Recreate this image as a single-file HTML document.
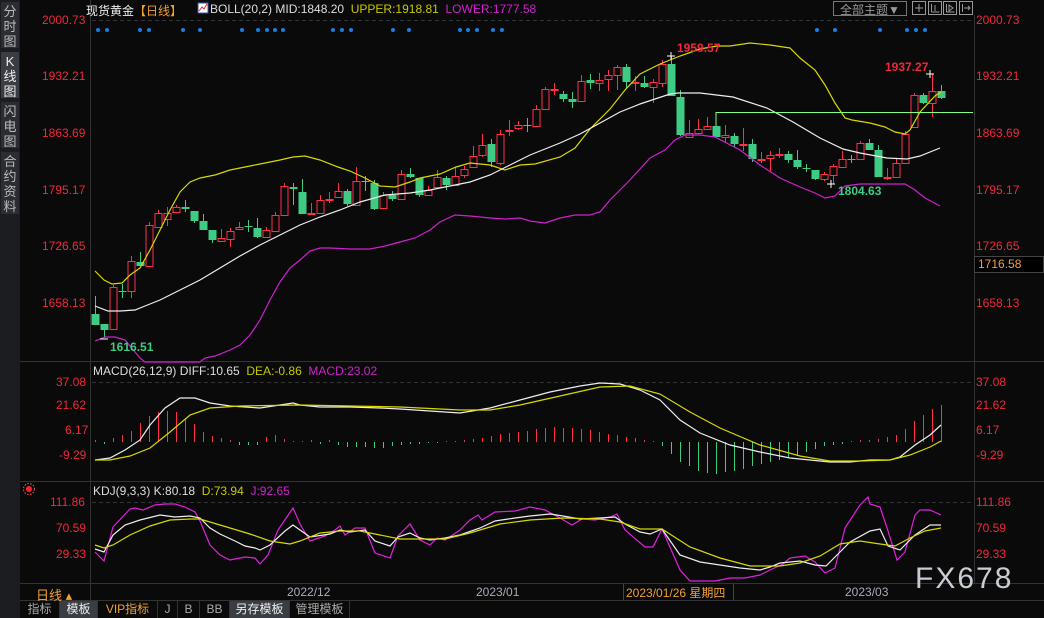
<!DOCTYPE html>
<html><head><meta charset="utf-8">
<style>
*{margin:0;padding:0;box-sizing:border-box}
body{width:1044px;height:618px;background:#0a0a0a;overflow:hidden;position:relative;font-family:"Liberation Sans","Noto Sans CJK SC",sans-serif;font-size:12px;color:#ddd}
.side{position:absolute;left:0;top:0;width:20px;height:618px;background:#1c1d21}
.tab{position:absolute;left:1px;width:18px;background:#2b2d33;color:#bbb;font-size:13px;line-height:15px;text-align:center;padding-top:2px}
.abs{position:absolute;white-space:nowrap}
.ax{position:absolute;left:976px;color:#f0283c;font-size:12px}
.tb{position:absolute;top:601px;height:17px;line-height:17px;font-size:12px;color:#aaa;text-align:center;border-right:1px solid #333}
</style></head><body>
<div class="side">
<div class="tab" style="top:2px;height:46px">分<br>时<br>图</div>
<div class="tab" style="top:52px;height:46px;background:#3a3d44;color:#eee">K<br>线<br>图</div>
<div class="tab" style="top:102px;height:46px">闪<br>电<br>图</div>
<div class="tab" style="top:152px;height:62px">合<br>约<br>资<br>料</div>
</div>
<svg class="abs" style="left:0;top:0" width="1044" height="618" id="sv">
<line x1="90.5" y1="0" x2="90.5" y2="600" stroke="#333"/>
<line x1="974.5" y1="15" x2="974.5" y2="583" stroke="#333"/>
<line x1="20" y1="361.5" x2="1044" y2="361.5" stroke="#333"/>
<line x1="20" y1="481.5" x2="1044" y2="481.5" stroke="#333"/>
<line x1="20" y1="583.5" x2="1044" y2="583.5" stroke="#333"/>
<line x1="20" y1="600.5" x2="1044" y2="600.5" stroke="#333"/>
<line x1="92" y1="20.5" x2="974" y2="20.5" stroke="#333" stroke-dasharray="4,3"/>
<line x1="92" y1="382.5" x2="974" y2="382.5" stroke="#333" stroke-dasharray="4,3"/>
<line x1="92" y1="502.5" x2="974" y2="502.5" stroke="#333" stroke-dasharray="4,3"/>
<g id="g"></g>
<rect x="974.5" y="256.5" width="69" height="16" fill="#000" stroke="#444"/>
<circle cx="29" cy="489" r="3" fill="#f22"/><circle cx="29" cy="489" r="5.5" fill="none" stroke="#f55" stroke-dasharray="1.5,1.5"/>
<rect x="833.5" y="1.5" width="73" height="14" fill="none" stroke="#777"/>
<g fill="none" stroke="#999">
<rect x="912.5" y="1.5" width="13" height="13"/><rect x="928.5" y="1.5" width="13" height="13"/><rect x="943.5" y="1.5" width="13" height="13"/><rect x="959.5" y="1.5" width="13" height="13"/>
<path d="M919 4v8M915 8h8M931.5 4v8M931.5 12h8M935 5v6M946.5 4v8M946.5 12h8M949 5l4 3-4 3zM962.5 4v8M964 8h6M968 6l2 2-2 2"/>
</g>
<rect x="198" y="3" width="10" height="10" fill="#fff" stroke="#35a"/><path d="M199 11l3-4 2 2 3-5" stroke="#e22" fill="none"/>
</svg>
<div class="abs" style="left:86px;top:2px;font-size:12px"><span style="color:#eee">现货黄金</span><span style="color:#f0a030">【日线】</span></div>
<div class="abs" style="left:210px;top:2px;font-size:12px"><span style="color:#ddd">BOLL(20,2) MID:1848.20</span>&nbsp; <span style="color:#c8c800">UPPER:1918.81</span>&nbsp; <span style="color:#d020d0">LOWER:1777.58</span></div>
<div class="abs" style="left:840px;top:1px;color:#999;font-size:12px">全部主题▼</div>
<div class="ax" style="top:13px">2000.73</div>
<div class="ax" style="top:69px">1932.21</div>
<div class="ax" style="top:126px">1863.69</div>
<div class="ax" style="top:183px">1795.17</div>
<div class="ax" style="top:239px">1726.65</div>
<div class="ax" style="top:257px;color:#f0a040;left:978px">1716.58</div>
<div class="ax" style="top:296px">1658.13</div>
<div class="ax" style="top:375px">37.08</div>
<div class="ax" style="top:398px">21.62</div>
<div class="ax" style="top:423px">6.17</div>
<div class="ax" style="top:448px">-9.29</div>
<div class="ax" style="top:495px">111.86</div>
<div class="ax" style="top:521px">70.59</div>
<div class="ax" style="top:547px">29.33</div>
<div class="abs" style="left:42px;top:13px;color:#f0283c">2000.73</div>
<div class="abs" style="left:42px;top:69px;color:#f0283c">1932.21</div>
<div class="abs" style="left:42px;top:126px;color:#f0283c">1863.69</div>
<div class="abs" style="left:42px;top:183px;color:#f0283c">1795.17</div>
<div class="abs" style="left:42px;top:239px;color:#f0283c">1726.65</div>
<div class="abs" style="left:42px;top:296px;color:#f0283c">1658.13</div>
<div class="abs" style="left:56px;top:375px;color:#f0283c">37.08</div>
<div class="abs" style="left:56px;top:398px;color:#f0283c">21.62</div>
<div class="abs" style="left:65px;top:423px;color:#f0283c">6.17</div>
<div class="abs" style="left:59px;top:448px;color:#f0283c">-9.29</div>
<div class="abs" style="left:50px;top:495px;color:#f0283c">111.86</div>
<div class="abs" style="left:56px;top:521px;color:#f0283c">70.59</div>
<div class="abs" style="left:56px;top:547px;color:#f0283c">29.33</div>
<div class="abs" style="left:677px;top:41px;color:#f0283c;font-weight:bold">1959.57</div>
<div class="abs" style="left:885px;top:60px;color:#f0283c;font-weight:bold">1937.27</div>
<div class="abs" style="left:838px;top:184px;color:#3ecb84;font-weight:bold">1804.63</div>
<div class="abs" style="left:110px;top:340px;color:#3ecb84;font-weight:bold">1616.51</div>
<div class="abs" style="left:93px;top:364px"><span style="color:#ddd">MACD(26,12,9) DIFF:10.65</span>&nbsp; <span style="color:#c8c800">DEA:-0.86</span>&nbsp; <span style="color:#d020d0">MACD:23.02</span></div>
<div class="abs" style="left:93px;top:484px"><span style="color:#ddd">KDJ(9,3,3) K:80.18</span>&nbsp; <span style="color:#c8c800">D:73.94</span>&nbsp; <span style="color:#d020d0">J:92.65</span></div>
<div class="abs" style="left:36px;top:585px;color:#f0a030;font-size:13px">日线 ▴</div>
<div class="abs" style="left:287px;top:585px;color:#aab">2022/12</div>
<div class="abs" style="left:476px;top:585px;color:#aab">2023/01</div>
<div class="abs" style="left:623px;top:584px;height:16px;width:111px;border-left:1px solid #444;border-right:1px solid #444;color:#f0a030;padding-left:2px">2023/01/26 星期四</div>
<div class="abs" style="left:845px;top:585px;color:#aab">2023/03</div>
<div class="abs" style="left:915px;top:562px;color:#c8ccd4;font-size:30px;letter-spacing:2px">FX678</div>
<div class="tb" style="left:20px;width:40px">指标</div>
<div class="tb" style="left:60px;width:38px;background:#3a3d44;color:#eee">模板</div>
<div class="tb" style="left:98px;width:60px;color:#f0a030">VIP指标</div>
<div class="tb" style="left:158px;width:20px">J</div>
<div class="tb" style="left:178px;width:22px">B</div>
<div class="tb" style="left:200px;width:30px">BB</div>
<div class="tb" style="left:230px;width:60px;background:#3a3d44;color:#eee">另存模板</div>
<div class="tb" style="left:290px;width:60px">管理模板</div>
<script>
var g=document.getElementById('g'),h='';
var R='#ff3048',G='#3ecb84';
// candles: x, top, bottom, color, high, low
var C=[[95,314,325,G,296,325],[104,324,330,G,324,338],[113,287,329,R,285,329],[122,291,291,G,284,298],[131,261,291,R,256,298],[140,262,266,G,252,266],[149,225,266,R,222,266],[158,213,227,R,210,227],[167,213,219,R,207,226],[176,207,212,R,205,212],[185,207,209,G,200,212],[194,211,221,G,211,223],[203,221,230,G,214,230],[212,230,240,G,230,243],[221,238,241,R,229,241],[230,231,239,R,228,247],[239,227,229,R,222,229],[248,226,226,G,220,232],[257,228,237,G,218,238],[266,230,237,R,227,237],[275,215,231,R,212,231],[284,186,215,R,183,215],[293,187,189,G,183,205],[302,192,214,G,179,214],[311,213,213,R,203,213],[320,200,213,R,195,213],[329,199,199,R,192,203],[338,191,197,R,183,197],[347,191,204,G,189,206],[356,181,205,R,167,205],[365,181,181,G,176,191],[374,183,209,G,180,210],[383,195,208,R,192,208],[392,195,199,G,191,201],[401,174,199,R,170,199],[410,174,177,G,168,178],[419,178,195,G,178,197],[428,190,195,R,186,196],[437,177,187,R,170,187],[446,178,185,G,176,190],[455,176,185,R,167,185],[464,169,175,R,166,178],[473,156,167,R,146,167],[482,145,155,R,134,157],[491,144,162,G,139,167],[500,134,163,R,130,165],[509,130,130,R,120,136],[518,125,128,R,121,130],[527,125,125,G,118,132],[536,109,126,R,105,127],[545,89,109,R,87,110],[554,89,89,R,83,95],[563,94,99,G,91,102],[572,99,102,G,92,108],[581,81,101,R,75,102],[590,80,83,G,74,89],[599,80,83,R,73,91],[608,75,79,R,70,91],[617,67,75,R,65,90],[626,67,82,G,64,89],[635,82,82,R,76,91],[644,83,87,G,76,88],[653,82,87,R,79,103],[662,64,83,R,60,87],[671,64,96,G,56,96],[680,97,135,G,90,136],[689,133,137,R,120,138],[698,129,133,R,119,134],[707,126,129,R,117,130],[716,126,137,G,126,137],[725,135,137,R,125,143],[734,136,144,G,133,147],[743,144,144,R,128,151],[752,144,159,G,139,162],[761,159,159,R,152,163],[770,155,158,R,151,171],[779,154,154,R,148,158],[788,154,160,G,151,163],[797,160,167,G,150,169],[806,168,168,G,164,172],[815,170,179,G,170,180],[824,174,179,R,172,181],[833,166,175,R,164,184],[842,159,167,R,151,167],[851,159,159,G,155,163],[860,143,159,R,141,160],[869,143,150,G,139,150],[878,150,177,G,145,177],[887,177,177,R,168,180],[896,163,177,R,158,177],[905,134,163,R,131,164],[914,95,127,R,93,128],[923,95,103,G,93,104],[932,91,103,R,74,117],[941,91,98,G,85,99]];
C.forEach(function(c){var x=c[0];
h+='<line x1="'+(x+.5)+'" y1="'+c[4]+'" x2="'+(x+.5)+'" y2="'+c[5]+'" stroke="'+c[3]+'"/>';
var hh=Math.max(c[2]-c[1],1);
if(c[3]==G)h+='<rect x="'+(x-3.5)+'" y="'+c[1]+'" width="8" height="'+hh+'" fill="'+G+'"/>';
else h+='<rect x="'+(x-3)+'" y="'+(c[1]+.5)+'" width="7" height="'+hh+'" fill="#0a0a0a" stroke="'+R+'"/>';});
function pl(p,col){return '<polyline fill="none" stroke="'+col+'" stroke-width="1.2" points="'+p.map(function(a){return a.join(',')}).join(' ')+'"/>';}
var UP=[[95,271],[104,280],[112,284],[122,283],[130,275],[140,268],[150,250],[160,230],[170,210],[180,192],[190,182],[200,178],[215,175],[230,170],[240,168],[260,164],[280,160],[293,157],[305,156],[320,160],[338,167],[350,171],[365,178],[380,186],[395,187],[410,182],[420,178],[440,174],[456,167],[470,163],[490,165],[505,170],[520,165],[535,164],[560,157],[575,148],[590,129],[610,109],[625,90],[640,74],[660,64],[680,56],[700,49],[717,46],[730,46],[750,43],[770,45],[790,48],[800,58],[815,70],[825,85],[835,103],[845,118],[852,120],[870,123],[885,127],[895,132],[905,134],[910,130],[920,112],[935,96],[941,92]];
var MID=[[95,306],[108,311],[120,311],[135,310],[145,306],[160,300],[180,290],[200,280],[220,268],[240,256],[260,245],[280,235],[300,225],[320,217],[340,210],[360,202],[385,195],[410,193],[430,190],[450,186],[470,182],[490,175],[510,165],[530,155],[560,143],[580,134],[600,123],[620,112],[640,104],[655,99],[670,94],[678,93],[700,93],[733,97],[767,108],[793,122],[820,138],[843,149],[860,153],[887,158],[907,159],[920,156],[940,148]];
var LO=[[95,341],[105,337],[115,337],[125,340],[140,358],[145,362],[200,362],[205,358],[215,356],[230,350],[240,345],[250,335],[260,320],[270,300],[280,282],[290,268],[300,260],[310,251],[320,248],[330,248],[350,249],[370,249],[385,246],[400,242],[415,238],[430,230],[440,222],[455,215],[470,216],[490,218],[505,219],[520,218],[530,221],[545,223],[560,218],[575,215],[590,215],[600,212],[610,200],[620,190],[630,180],[650,158],[665,150],[675,140],[685,135],[700,135],[715,137],[740,150],[760,165],[780,178],[800,187],[815,193],[825,198],[835,196],[845,186],[860,184],[880,184],[905,184],[915,190],[925,198],[940,206]];
h+=pl(UP,'#d8d800')+pl(MID,'#eeeeee')+pl(LO,'#d020d0');
h+='<polyline fill="none" stroke="#80ff80" points="716,126 716,112.5 973,112.5"/>';
h+='<path d="M667 56h8M671 52v8M827 184h8M831 180v8M926 74h8M930 70v8M100 339h8" stroke="#fff"/>';
[98,107,140,149,183,200,242,258,267,275,283,333,342,351,393,409,460,468,477,493,502,817,835,880,907,916,925].forEach(function(x){h+='<circle cx="'+x+'" cy="30" r="2" fill="#1e7ee0"/>'});
// macd hist
var HK=[[95,2],[104,-2],[113,4],[122,7],[131,11],[140,19],[149,26],[158,30],[167,31],[176,30],[185,24],[194,18],[203,10],[212,6],[221,4],[230,2],[239,-3],[248,-3],[257,-3],[266,5],[275,7],[284,3],[293,1],[302,1],[311,2],[320,-2],[329,2],[338,-3],[347,-5],[356,-5],[380,-6],[400,-3],[430,-1],[460,1],[480,4],[500,8],[520,10],[540,14],[555,15],[570,14],[590,12],[610,8],[640,3],[660,-2],[680,-20],[700,-30],[715,-32],[740,-28],[760,-22],[790,-15],[820,-5],[840,-2],[860,2],[880,3],[900,8],[915,22],[930,32],[941,37]];
function iv(K,x){for(var i=1;i<K.length;i++){if(x<=K[i][0]){var a=K[i-1],b=K[i];return a[1]+(b[1]-a[1])*(x-a[0])/(b[0]-a[0]);}}return K[K.length-1][1];}
for(var x=95;x<=941;x+=9){var v=Math.round(iv(HK,x));if(v==0)v=1;var z=442;
h+='<line x1="'+(x+.5)+'" y1="'+z+'" x2="'+(x+.5)+'" y2="'+(z-v)+'" stroke="'+(v>0?R:G)+'"/>';}
var DIFF=[[95,460],[110,458],[125,450],[140,440],[150,425],[165,408],[180,398],[195,398],[210,403],[230,406],[260,408],[280,405],[293,403],[300,405],[320,407],[350,407],[380,408],[400,409],[430,411],[460,413],[490,408],[520,400],[550,392],[580,386],[600,383],[620,384],[640,390],[660,400],[680,420],[700,433],[730,445],[760,452],[790,458],[810,460],[830,462],[850,462],[870,460],[890,460],[900,457],[915,445],[930,435],[941,425]];
var DEA=[[95,460],[110,460],[130,456],[150,448],[170,432],[190,415],[210,408],[240,406],[300,405],[400,407],[460,410],[490,410],[520,405],[560,396],[600,387],[630,386],[660,394],[690,412],[720,428],[760,445],[800,456],[830,461],[860,461],[890,460],[910,455],[930,447],[941,441]];
h+=pl(DIFF,'#eeeeee')+pl(DEA,'#d8d800');
var J=[[95,552],[104,561],[113,527],[130,509],[135,508],[143,510],[155,505],[165,504],[175,504],[185,507],[195,512],[200,521],[210,545],[220,555],[230,560],[245,557],[255,558],[260,564],[268,555],[278,530],[293,508],[300,524],[310,541],[325,536],[335,530],[340,526],[345,535],[355,528],[365,528],[375,553],[390,558],[398,536],[410,524],[420,540],[430,545],[437,538],[445,540],[460,530],[470,520],[478,515],[482,520],[495,512],[515,511],[530,507],[545,510],[560,518],[572,525],[582,519],[595,520],[610,517],[617,514],[625,530],[645,547],[653,547],[662,529],[680,570],[690,581],[715,581],[730,578],[745,578],[760,575],[770,570],[783,564],[790,558],[805,556],[815,562],[825,573],[835,568],[845,528],[860,505],[868,497],[870,504],[880,507],[888,531],[897,560],[905,552],[915,515],[920,510],[930,510],[941,515]];
var Kk=[[95,549],[104,552],[113,535],[125,525],[140,520],[160,515],[175,517],[190,516],[200,518],[210,528],[220,534],[235,541],[245,546],[255,548],[260,550],[270,545],[285,531],[293,525],[300,530],[310,537],[330,534],[340,530],[350,532],[365,530],[375,541],[390,546],[398,537],[410,533],[420,538],[430,540],[445,538],[460,535],[480,528],[495,521],[515,518],[530,516],[550,514],[563,516],[580,519],[600,518],[615,517],[625,524],[640,532],[650,534],[662,529],[680,555],[700,562],[720,565],[740,568],[760,570],[770,567],[780,563],[800,561],[815,565],[826,566],[835,557],[850,542],[870,531],[880,529],[888,546],[900,550],[915,535],[930,525],[941,525]];
var D=[[95,545],[104,548],[113,545],[130,535],[150,526],[170,520],[190,519],[200,519],[220,525],[250,534],[270,541],[290,544],[300,541],[320,533],[340,531],[360,531],[380,535],[400,539],[420,539],[445,539],[470,533],[500,524],[530,520],[563,518],[600,519],[620,522],[640,529],[662,529],[690,547],[720,558],[750,566],[780,566],[800,563],[820,556],[840,544],[860,541],[880,544],[895,546],[910,538],[925,531],[941,528]];
h+=pl(J,'#e020e0')+pl(Kk,'#eeeeee')+pl(D,'#d8d800');
g.innerHTML=h;
</script>
</body></html>
